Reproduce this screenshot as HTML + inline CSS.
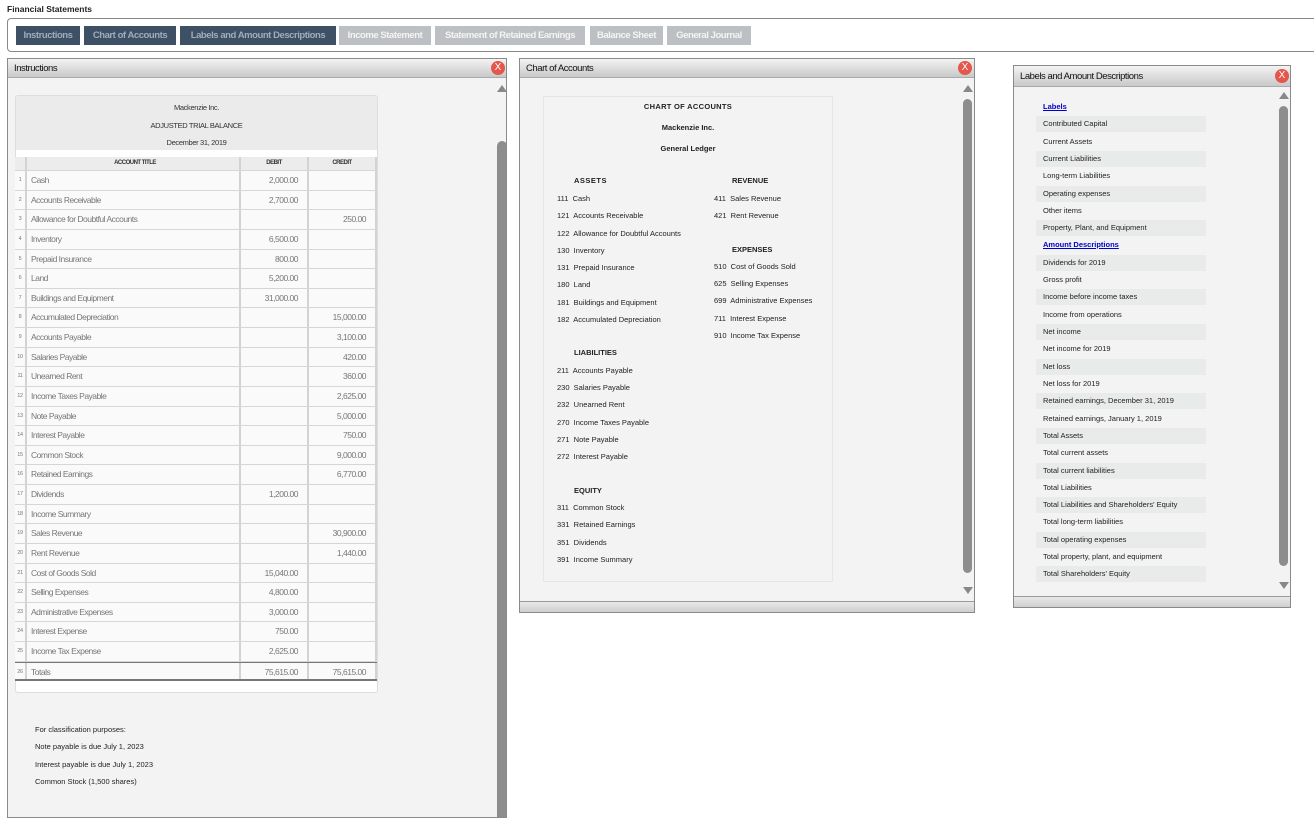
<!DOCTYPE html>
<html><head><meta charset="utf-8"><style>
*{margin:0;padding:0;box-sizing:border-box}
body{width:1314px;height:802px;overflow:hidden;background:#fff;font-family:"Liberation Sans",Arial,sans-serif;position:relative;color:#222}
.a{position:absolute}
.tab{position:absolute;top:26px;height:19px;font-size:9.5px;font-weight:bold;line-height:19px;text-align:center;color:#fff;letter-spacing:-0.45px;white-space:nowrap;overflow:hidden}
.dk{background:#3e5064;color:#9fadbb}
.lt{background:#bcc0c4;color:#f4f4f4}
.panel{position:absolute;border:1px solid #8a8a8a;background:#f2f3f2;overflow:hidden}
.hdr{position:absolute;left:0;right:0;top:0;height:19px;background:linear-gradient(#f3f3f3,#c9c9c9);border-bottom:1px solid #aaa;font-size:9.5px;line-height:19px;padding-left:6px;color:#111;letter-spacing:-0.45px}
.x{position:absolute;width:14px;height:14px;border-radius:7px;background:#e4574c;color:#fff;font-size:10px;line-height:14px;text-align:center}
.thumb{position:absolute;width:9px;background:#8d8d8d;border-radius:5px}
.up{position:absolute;width:0;height:0;border-left:5px solid transparent;border-right:5px solid transparent;border-bottom:7px solid #888}
.dn{position:absolute;width:0;height:0;border-left:5px solid transparent;border-right:5px solid transparent;border-top:7px solid #888}
.foot{position:absolute;left:0;right:0;bottom:0;height:11px;background:linear-gradient(#e8e8e8,#cfcfcf);border-top:1px solid #999}
.tb{position:absolute;left:15px;top:157px;width:362px;font-size:8.5px;color:#777;letter-spacing:-0.5px}
.r{display:flex;height:19.64px;border-bottom:1px solid #d6d6d6;background:#fafafa}
.r div{border-right:2px solid #d3d3d3;line-height:18px;white-space:nowrap}
.c0{width:12px;font-size:5.5px;text-align:center;letter-spacing:-0.3px}
.c1{width:214px;padding-left:4px}
.c2{width:68px;text-align:right;padding-right:9px}
.c3{width:68px;text-align:right;padding-right:9px}
.s{font-size:7.5px;color:#222;position:absolute;white-space:nowrap}
.n{letter-spacing:-0.35px;color:#333}
.lb{position:absolute;left:1036px;width:170px;height:16px;font-size:7.5px;line-height:16px;padding-left:7px;color:#222}
.sh{background:#e9eaea}
</style></head><body>
<div class="a" style="left:7px;top:4px;font-size:8.5px;font-weight:bold">Financial Statements</div>
<div class="a" style="left:7px;top:18px;width:1320px;height:34px;border:1px solid #888;border-radius:4px"></div>
<div class="tab dk" style="left:16px;width:64px">Instructions</div>
<div class="tab dk" style="left:84px;width:92px">Chart of Accounts</div>
<div class="tab dk" style="left:180px;width:156px">Labels and Amount Descriptions</div>
<div class="tab lt" style="left:339px;width:92px">Income Statement</div>
<div class="tab lt" style="left:435px;width:150px">Statement of Retained Earnings</div>
<div class="tab lt" style="left:590px;width:73px">Balance Sheet</div>
<div class="tab lt" style="left:667px;width:84px">General Journal</div>

<!-- Panel 1 -->
<div class="panel" style="left:7px;top:58px;width:500px;height:760px">
<div class="hdr">Instructions</div>
<div class="x" style="left:483px;top:2px">X</div>
<div class="up" style="left:489px;top:26px"></div>
<div class="thumb" style="left:489px;top:82px;height:700px;width:10px;border-radius:5px 5px 0 0"></div>
</div>
<div class="a" style="left:15px;top:95px;width:363px;height:598px;background:#fff;border:1px solid #ddd;border-radius:3px"></div>
<div class="a" style="left:16px;top:96px;width:361px;height:54px;background:#ebebeb"></div>
<div class="s n" style="left:16px;width:361px;text-align:center;top:103px">Mackenzie Inc.</div>
<div class="s n" style="left:16px;width:361px;text-align:center;top:121px">ADJUSTED TRIAL BALANCE</div>
<div class="s n" style="left:16px;width:361px;text-align:center;top:138px">December 31, 2019</div>
<div class="tb">
<div class="r" style="height:14px;background:#ececec;font-size:6px;color:#333;font-weight:bold"><div class="c0" style="line-height:13px"></div><div class="c1" style="text-align:center;line-height:13px">ACCOUNT TITLE</div><div class="c2" style="text-align:center;padding:0;line-height:13px">DEBIT</div><div class="c3" style="text-align:center;padding:0;line-height:13px">CREDIT</div></div>
<div class="r"><div class="c0">1</div><div class="c1">Cash</div><div class="c2">2,000.00</div><div class="c3"></div></div>
<div class="r"><div class="c0">2</div><div class="c1">Accounts Receivable</div><div class="c2">2,700.00</div><div class="c3"></div></div>
<div class="r"><div class="c0">3</div><div class="c1">Allowance for Doubtful Accounts</div><div class="c2"></div><div class="c3">250.00</div></div>
<div class="r"><div class="c0">4</div><div class="c1">Inventory</div><div class="c2">6,500.00</div><div class="c3"></div></div>
<div class="r"><div class="c0">5</div><div class="c1">Prepaid Insurance</div><div class="c2">800.00</div><div class="c3"></div></div>
<div class="r"><div class="c0">6</div><div class="c1">Land</div><div class="c2">5,200.00</div><div class="c3"></div></div>
<div class="r"><div class="c0">7</div><div class="c1">Buildings and Equipment</div><div class="c2">31,000.00</div><div class="c3"></div></div>
<div class="r"><div class="c0">8</div><div class="c1">Accumulated Depreciation</div><div class="c2"></div><div class="c3">15,000.00</div></div>
<div class="r"><div class="c0">9</div><div class="c1">Accounts Payable</div><div class="c2"></div><div class="c3">3,100.00</div></div>
<div class="r"><div class="c0">10</div><div class="c1">Salaries Payable</div><div class="c2"></div><div class="c3">420.00</div></div>
<div class="r"><div class="c0">11</div><div class="c1">Unearned Rent</div><div class="c2"></div><div class="c3">360.00</div></div>
<div class="r"><div class="c0">12</div><div class="c1">Income Taxes Payable</div><div class="c2"></div><div class="c3">2,625.00</div></div>
<div class="r"><div class="c0">13</div><div class="c1">Note Payable</div><div class="c2"></div><div class="c3">5,000.00</div></div>
<div class="r"><div class="c0">14</div><div class="c1">Interest Payable</div><div class="c2"></div><div class="c3">750.00</div></div>
<div class="r"><div class="c0">15</div><div class="c1">Common Stock</div><div class="c2"></div><div class="c3">9,000.00</div></div>
<div class="r"><div class="c0">16</div><div class="c1">Retained Earnings</div><div class="c2"></div><div class="c3">6,770.00</div></div>
<div class="r"><div class="c0">17</div><div class="c1">Dividends</div><div class="c2">1,200.00</div><div class="c3"></div></div>
<div class="r"><div class="c0">18</div><div class="c1">Income Summary</div><div class="c2"></div><div class="c3"></div></div>
<div class="r"><div class="c0">19</div><div class="c1">Sales Revenue</div><div class="c2"></div><div class="c3">30,900.00</div></div>
<div class="r"><div class="c0">20</div><div class="c1">Rent Revenue</div><div class="c2"></div><div class="c3">1,440.00</div></div>
<div class="r"><div class="c0">21</div><div class="c1">Cost of Goods Sold</div><div class="c2">15,040.00</div><div class="c3"></div></div>
<div class="r"><div class="c0">22</div><div class="c1">Selling Expenses</div><div class="c2">4,800.00</div><div class="c3"></div></div>
<div class="r"><div class="c0">23</div><div class="c1">Administrative Expenses</div><div class="c2">3,000.00</div><div class="c3"></div></div>
<div class="r"><div class="c0">24</div><div class="c1">Interest Expense</div><div class="c2">750.00</div><div class="c3"></div></div>
<div class="r"><div class="c0">25</div><div class="c1">Income Tax Expense</div><div class="c2">2,625.00</div><div class="c3"></div></div>
<div class="r" style="border-top:1px solid #777;border-bottom:2px solid #777"><div class="c0">26</div><div class="c1">Totals</div><div class="c2">75,615.00</div><div class="c3">75,615.00</div></div>
</div>
<div class="s" style="left:35px;top:725px">For classification purposes:</div>
<div class="s" style="left:35px;top:742px">Note payable is due July 1, 2023</div>
<div class="s" style="left:35px;top:760px">Interest payable is due July 1, 2023</div>
<div class="s" style="left:35px;top:777px">Common Stock (1,500 shares)</div>

<!-- Panel 2 -->
<div class="panel" style="left:519px;top:58px;width:456px;height:555px">
<div class="hdr">Chart of Accounts</div>
<div class="x" style="left:438px;top:2px">X</div>
<div class="up" style="left:443px;top:26px"></div>
<div class="thumb" style="left:443px;top:40px;height:474px"></div>
<div class="dn" style="left:443px;top:528px"></div>
<div class="foot"></div>
</div>
<div class="a" style="left:543px;top:96px;width:290px;height:486px;border:1px solid #e6e6e6"></div>
<div class="s" style="left:543px;width:290px;text-align:center;top:102px;font-weight:bold;font-size:7.5px;letter-spacing:.3px">CHART OF ACCOUNTS</div>
<div class="s" style="left:543px;width:290px;text-align:center;top:123px;font-weight:bold">Mackenzie Inc.</div>
<div class="s" style="left:543px;width:290px;text-align:center;top:144px;font-weight:bold">General Ledger</div>
<div class="s" style="left:574px;top:176px;font-weight:bold;letter-spacing:.5px">ASSETS</div>
<div class="s" style="left:732px;top:176px;font-weight:bold">REVENUE</div>
<div class="s" style="left:557px;top:194px">111&nbsp; Cash</div>
<div class="s" style="left:557px;top:211px">121&nbsp; Accounts Receivable</div>
<div class="s" style="left:557px;top:229px">122&nbsp; Allowance for Doubtful Accounts</div>
<div class="s" style="left:557px;top:246px">130&nbsp; Inventory</div>
<div class="s" style="left:557px;top:263px">131&nbsp; Prepaid Insurance</div>
<div class="s" style="left:557px;top:280px">180&nbsp; Land</div>
<div class="s" style="left:557px;top:298px">181&nbsp; Buildings and Equipment</div>
<div class="s" style="left:557px;top:315px">182&nbsp; Accumulated Depreciation</div>
<div class="s" style="left:714px;top:194px">411&nbsp; Sales Revenue</div>
<div class="s" style="left:714px;top:211px">421&nbsp; Rent Revenue</div>
<div class="s" style="left:732px;top:245px;font-weight:bold">EXPENSES</div>
<div class="s" style="left:714px;top:262px">510&nbsp; Cost of Goods Sold</div>
<div class="s" style="left:714px;top:279px">625&nbsp; Selling Expenses</div>
<div class="s" style="left:714px;top:296px">699&nbsp; Administrative Expenses</div>
<div class="s" style="left:714px;top:314px">711&nbsp; Interest Expense</div>
<div class="s" style="left:714px;top:331px">910&nbsp; Income Tax Expense</div>
<div class="s" style="left:574px;top:348px;font-weight:bold">LIABILITIES</div>
<div class="s" style="left:557px;top:366px">211&nbsp; Accounts Payable</div>
<div class="s" style="left:557px;top:383px">230&nbsp; Salaries Payable</div>
<div class="s" style="left:557px;top:400px">232&nbsp; Unearned Rent</div>
<div class="s" style="left:557px;top:418px">270&nbsp; Income Taxes Payable</div>
<div class="s" style="left:557px;top:435px">271&nbsp; Note Payable</div>
<div class="s" style="left:557px;top:452px">272&nbsp; Interest Payable</div>
<div class="s" style="left:574px;top:486px;font-weight:bold">EQUITY</div>
<div class="s" style="left:557px;top:503px">311&nbsp; Common Stock</div>
<div class="s" style="left:557px;top:520px">331&nbsp; Retained Earnings</div>
<div class="s" style="left:557px;top:538px">351&nbsp; Dividends</div>
<div class="s" style="left:557px;top:555px">391&nbsp; Income Summary</div>

<!-- Panel 3 -->
<div class="panel" style="left:1013px;top:65px;width:278px;height:543px">
<div class="hdr" style="height:21px;line-height:21px">Labels and Amount Descriptions</div>
<div class="x" style="left:261px;top:3px">X</div>
<div class="up" style="left:265px;top:26px"></div>
<div class="thumb" style="left:265px;top:40px;height:460px"></div>
<div class="dn" style="left:265px;top:516px"></div>
<div class="foot"></div>
</div>
<div class="lb" style="top:99px;color:#00c;font-weight:bold;text-decoration:underline">Labels</div>
<div class="lb sh" style="top:116px">Contributed Capital</div>
<div class="lb" style="top:134px">Current Assets</div>
<div class="lb sh" style="top:151px">Current Liabilities</div>
<div class="lb" style="top:168px">Long-term Liabilities</div>
<div class="lb sh" style="top:186px">Operating expenses</div>
<div class="lb" style="top:203px">Other items</div>
<div class="lb sh" style="top:220px">Property, Plant, and Equipment</div>
<div class="lb" style="top:237px;color:#00c;font-weight:bold;text-decoration:underline">Amount Descriptions</div>
<div class="lb sh" style="top:255px">Dividends for 2019</div>
<div class="lb" style="top:272px">Gross profit</div>
<div class="lb sh" style="top:289px">Income before income taxes</div>
<div class="lb" style="top:307px">Income from operations</div>
<div class="lb sh" style="top:324px">Net income</div>
<div class="lb" style="top:341px">Net income for 2019</div>
<div class="lb sh" style="top:359px">Net loss</div>
<div class="lb" style="top:376px">Net loss for 2019</div>
<div class="lb sh" style="top:393px">Retained earnings, December 31, 2019</div>
<div class="lb" style="top:411px">Retained earnings, January 1, 2019</div>
<div class="lb sh" style="top:428px">Total Assets</div>
<div class="lb" style="top:445px">Total current assets</div>
<div class="lb sh" style="top:463px">Total current liabilities</div>
<div class="lb" style="top:480px">Total Liabilities</div>
<div class="lb sh" style="top:497px">Total Liabilities and Shareholders' Equity</div>
<div class="lb" style="top:514px">Total long-term liabilities</div>
<div class="lb sh" style="top:532px">Total operating expenses</div>
<div class="lb" style="top:549px">Total property, plant, and equipment</div>
<div class="lb sh" style="top:566px">Total Shareholders' Equity</div>
</body></html>
